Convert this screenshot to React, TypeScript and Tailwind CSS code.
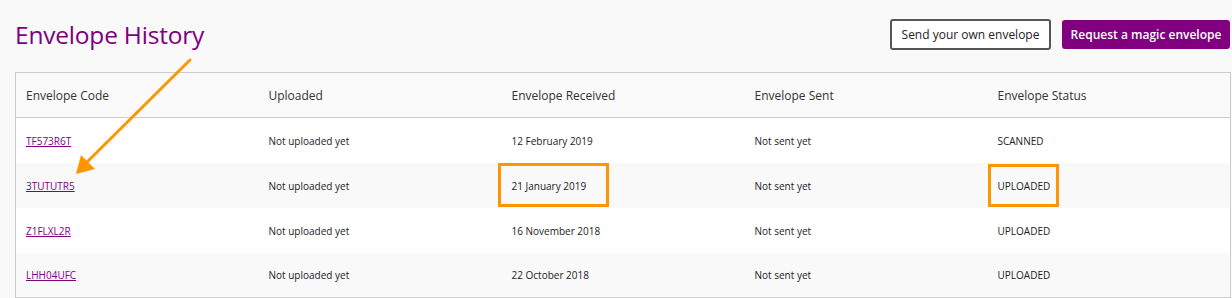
const rows = [
  { code: "TF573R6T", uploaded: "Not uploaded yet", received: "12 February 2019", sent: "Not sent yet", status: "SCANNED" },
  { code: "3TUTUTR5", uploaded: "Not uploaded yet", received: "21 January 2019", sent: "Not sent yet", status: "UPLOADED" },
  { code: "Z1FLXL2R", uploaded: "Not uploaded yet", received: "16 November 2018", sent: "Not sent yet", status: "UPLOADED" },
  { code: "LHH04UFC", uploaded: "Not uploaded yet", received: "22 October 2018", sent: "Not sent yet", status: "UPLOADED" },
];

const headers = ["Envelope Code", "Uploaded", "Envelope Received", "Envelope Sent", "Envelope Status"];

export default function App() {
  return (
    <div
      className="relative w-[1232px] h-[298px] overflow-hidden bg-[#f9f9f9] text-[#333]"
      style={{ fontFamily: '"Open Sans", "Noto Sans", sans-serif' }}
    >
      <div className="pl-[15px] pr-[2px]">
        {/* Header */}
        <div className="flex items-start justify-between h-[72px] pt-[19px]">
          <h1 className="mt-[1px] text-[24.5px] leading-[30px] text-[#800080] tracking-[-0.2px]">Envelope History</h1>
          <div className="flex items-start gap-[11px]">
            <button className="w-[161px] h-[31px] border-2 border-[#555] rounded-[3px] bg-white text-[12px] text-[#222]">
              Send your own envelope
            </button>
            <button className="mt-[1px] w-[168px] h-[29px] rounded-[3px] bg-[#800080] text-white text-[12px] font-semibold">
              Request a magic envelope
            </button>
          </div>
        </div>

        {/* Table */}
        <table className="w-[1215px] table-fixed border-collapse border border-[#ccc]">
          <thead>
            <tr className="h-[45px] bg-[#fafafa] border-b border-[#ccc]">
              {headers.map((h) => (
                <th key={h} className="w-[243px] pl-[10px] pt-[2px] text-left font-normal text-[12px] text-[#333]">
                  {h}
                </th>
              ))}
            </tr>
          </thead>
          <tbody>
            {rows.map((r, i) => (
              <tr key={r.code} className={`h-[45px] ${i % 2 === 1 ? "bg-[#f9f9f9]" : "bg-white"}`}>
                <td className="pl-[10px] pt-[2px] text-[10px]">
                  <a href="#" className="text-[#800080] underline">{r.code}</a>
                </td>
                <td className="pl-[10px] pt-[2px] text-[10px] text-[#222]">{r.uploaded}</td>
                <td className="pl-[10px] pt-[2px] text-[10px] text-[#222]">{r.received}</td>
                <td className="pl-[10px] pt-[2px] text-[10px] text-[#222]">{r.sent}</td>
                <td className="pl-[10px] pt-[2px] text-[10px] text-[#222]">{r.status}</td>
              </tr>
            ))}
          </tbody>
        </table>
      </div>

      {/* Annotations */}
      <svg className="absolute left-0 top-0 pointer-events-none" width="1232" height="298">
        <line x1="190" y1="60" x2="86" y2="163" stroke="#ff9500" strokeWidth="3" strokeLinecap="round" />
        <polygon points="76,174 81,155 95,169" fill="#ff9500" />
        <rect x="499.5" y="164.5" width="108" height="41" fill="none" stroke="#ff9500" strokeWidth="3" />
        <rect x="989.5" y="165.5" width="68" height="40" fill="none" stroke="#ff9500" strokeWidth="3" />
      </svg>
    </div>
  );
}
